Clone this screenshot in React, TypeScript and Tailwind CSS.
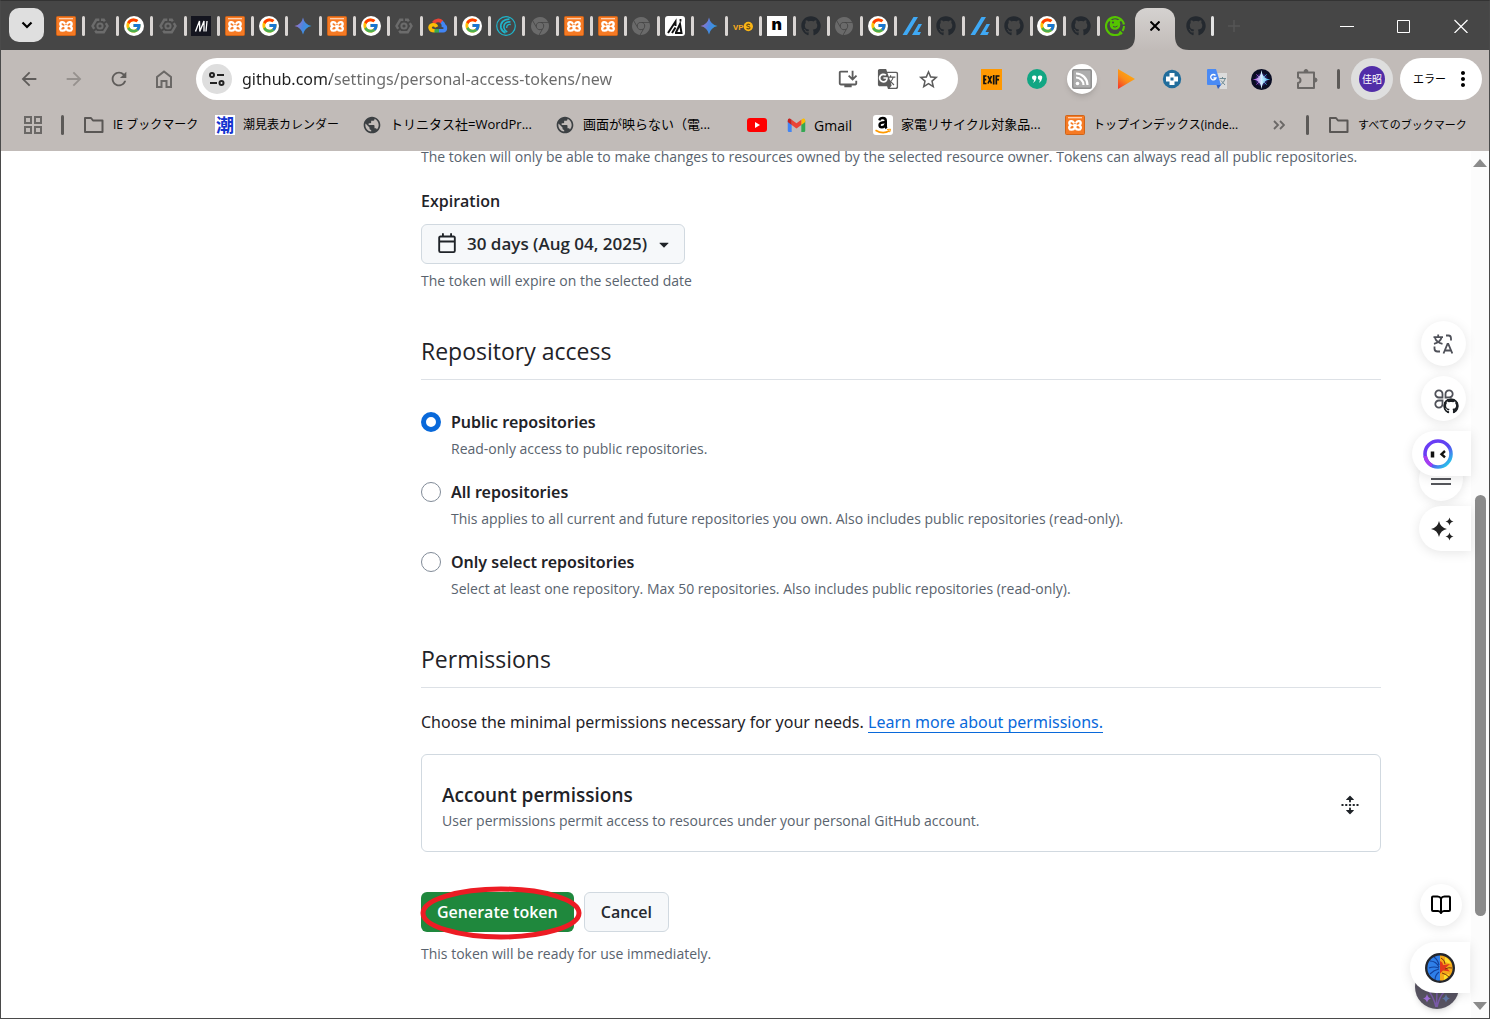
import type { ReactNode } from "react";
import { FcGoogle } from "react-icons/fc";
import { SiGooglechrome } from "react-icons/si";
import { FaGithub } from "react-icons/fa";
import {
  MdArrowBack,
  MdArrowForward,
  MdRefresh,
  MdInstallDesktop,
  MdGTranslate,
  MdStarBorder,
  MdMoreVert,
  MdPublic,
} from "react-icons/md";

const ui = "font-['Open_Sans','Noto_Sans_CJK_JP',sans-serif]";

/* ---------- tab icons ---------- */

function Xampp() {
  return (
    <svg viewBox="0 0 20 20" className="size-5 shrink-0">
      <rect x="0.500" y="0.500" width="19" height="19" rx="1" fill="#f67a24" stroke="#cf6419" />
      <path d="M3 2.700h14" stroke="#ffd9bd" strokeWidth="1.200" />
      <g fill="none" stroke="#fff" strokeWidth="2.300" strokeLinecap="round">
        <path d="M8.700 7.500C7.500 5.300 4.200 5.800 4.300 8.200c0 1.200 1 1.500 1.700 2.100-1.500.6-2.100 1.500-1.700 3 .6 2 4.400 1.900 5.200-.5l.5-2.300" />
        <path d="M11.300 7.500c1.200-2.200 4.500-1.700 4.400.7 0 1.200-1 1.500-1.700 2.100 1.500.6 2.100 1.500 1.700 3-.6 2-4.400 1.900-5.200-.5L10 10.500" />
        <path d="M8.500 10.300h3" />
      </g>
    </svg>
  );
}

function Google() {
  return (
    <span className="flex size-5 items-center justify-center rounded-full bg-white">
      <FcGoogle className="size-[17px]" />
    </span>
  );
}

function HexCloud() {
  return (
    <svg viewBox="0 0 20 20" className="size-5" fill="none" stroke="#6c6c6c">
      <path d="M9.300 3.800H6.200L2.500 10l1.700 2.800M5.300 14.600l1 1.600h7.500l3.700-6.200-1.700-2.800M11 3.800h2.800l1 1.600" strokeWidth="2.400" />
      <circle cx="10" cy="10" r="2.600" strokeWidth="2" />
    </svg>
  );
}

function Mlogo() {
  return (
    <svg viewBox="0 0 20 20" className="size-5">
      <rect width="20" height="20" fill="#14151f" />
      <path d="M4.500 15.500 8.500 5l.3 10.500L13 5v10.500M16 5l-1 10.500" fill="none" stroke="#fff" strokeWidth="1.300" />
    </svg>
  );
}

function Gemini() {
  return (
    <svg viewBox="0 0 20 20" className="size-5">
      <defs>
        <linearGradient id="gem" x1="0" x2="1" y1="0.300" y2="0.700">
          <stop offset="0.100" stopColor="#9a72c8" />
          <stop offset="0.500" stopColor="#4a86e0" />
          <stop offset="1" stopColor="#2ba0e0" />
        </linearGradient>
      </defs>
      <path d="M10 1.500Q11.500 8.500 18.500 10 11.500 11.500 10 18.500 8.500 11.500 1.500 10 8.500 8.500 10 1.500Z" fill="url(#gem)" />
    </svg>
  );
}

function GoogleCloud() {
  return (
    <svg viewBox="0 0 20 20" className="size-5" fill="none" strokeWidth="3.600">
      <path d="M5.500 7A5.500 5.500 0 0 1 14 6" stroke="#ea4335" />
      <path d="M13.500 6c1.500 1 1.900 2.200 1.900 3.500 2.600.5 2.800 5-.4 5.300h-4" stroke="#4285f4" />
      <path d="M11 14.800H6" stroke="#34a853" />
      <path d="M6.500 14.800C1 14.500.8 9.500 5 8.800c1.800-.2 3 .8 3.600 2.200" stroke="#fbbc05" />
    </svg>
  );
}

function Swirl() {
  return (
    <svg viewBox="0 0 20 20" className="size-5" fill="none" stroke="#1fb5cb">
      <circle cx="10" cy="10" r="9.300" strokeWidth="1.200" />
      <path d="M13.500 3.200C8 3 4 6.500 5 12c.5 2.300 2.200 4 4.500 4.800" strokeWidth="1.800" />
      <path d="M14.500 6C10.500 5.200 7.300 8 8 11.800c.4 2 1.600 3.400 3.300 4.200" strokeWidth="1.600" />
      <path d="M14.800 8.500c-2.800-.4-4.400 1-4 3.500" strokeWidth="1.300" />
    </svg>
  );
}

function Chrome() {
  return (
    <span className="flex size-5 items-center justify-center">
      <SiGooglechrome className="size-[18px] text-[#6a6a6a]" />
    </span>
  );
}

function AiLogo() {
  return (
    <svg viewBox="0 0 20 20" className="size-5">
      <rect width="20" height="20" rx="3" fill="#fff" />
      <path d="M3 17 10.500 5.500V10M7 17l3.500-5.500M11 16.500l4-8.500 1.500 9H10" fill="none" stroke="#111" strokeWidth="2" />
      <path d="M15.500 3v2.500" stroke="#111" strokeWidth="1.800" />
    </svg>
  );
}

function Vps() {
  return (
    <svg viewBox="0 0 20 20" className="size-5">
      <text x="0" y="14" fontFamily="Roboto" fontWeight="700" fontSize="8" fill="#f5a81c">VP</text>
      <circle cx="15.300" cy="10.500" r="4.700" fill="#fbb615" />
      <path d="M17 8.700q-3-1.200-3.200.5c0 1.700 3.300 1 3.200 2.700-.3 1.500-2.500 1-3.500.4" fill="none" stroke="#6b4a10" strokeWidth="1.200" />
    </svg>
  );
}

function Nlogo() {
  return (
    <span className="flex size-5 items-center justify-center bg-white pb-[3px] font-['Inter',sans-serif] text-base leading-none font-black text-black">
      n
    </span>
  );
}

function Github() {
  return <FaGithub className="size-5 text-[#24292f]" />;
}

function Bars() {
  return (
    <svg viewBox="0 0 20 20" className="size-5" fill="#3fa9f5">
      <path d="M11.500 1H16L5 19H.5ZM16.500 8H20l-4.500 8H19l-1.500 3H10Z" />
    </svg>
  );
}

function GreenQ() {
  return (
    <svg viewBox="0 0 20 20" className="size-5">
      <path d="M15.500 17.300A9 9 0 1 1 18.900 8.500" fill="none" stroke="#55c500" strokeWidth="2.200" />
      <path d="M19 10a9 9 0 0 1-1.500 5" fill="none" stroke="#55c500" strokeWidth="2" />
      <circle cx="10" cy="8.500" r="5.300" fill="#55c500" />
      <path d="m4 3.500 3 2M16 3.500l-3 2M14.500 15.500l2.500 2.500" stroke="#55c500" strokeWidth="2.200" />
      <circle cx="8" cy="6.500" r="1" fill="#464646" />
      <path d="M8 10.500q2 1.500 4.500-.5" stroke="#464646" fill="none" />
    </svg>
  );
}

const tabs: [string, () => ReactNode][] = [
  ["XAMPP", Xampp], ["API", HexCloud], ["Google", Google], ["API", HexCloud], ["M", Mlogo],
  ["XAMPP", Xampp], ["Google", Google], ["Gemini", Gemini], ["XAMPP", Xampp], ["Google", Google],
  ["API", HexCloud], ["Google Cloud", GoogleCloud], ["Google", Google], ["Swirl", Swirl], ["Chrome", Chrome],
  ["XAMPP", Xampp], ["XAMPP", Xampp], ["Chrome", Chrome], ["AI", AiLogo], ["Gemini", Gemini],
  ["VPS", Vps], ["n", Nlogo], ["GitHub", Github], ["Chrome", Chrome], ["Google", Google],
  ["Zenn", Bars], ["GitHub", Github], ["Zenn", Bars], ["GitHub", Github], ["Google", Google],
  ["GitHub", Github], ["Qiita", GreenQ],
];

function TabStrip() {
  return (
    <header className="flex h-[49px] shrink-0 items-stretch bg-[#464646]">
      <button aria-label="Search tabs" className="mt-[7px] ml-2 flex h-[34px] w-[35px] items-center justify-center rounded-[10px] bg-[#dfdfdf]">
        <svg viewBox="0 0 12 12" className="size-3" fill="none" stroke="#000" strokeWidth="2.200">
          <path d="m1.500 3.500 4.500 4.500 4.500-4.500" />
        </svg>
      </button>
      <nav aria-label="Tabs" className="ml-3 flex w-[1083px] items-center">
        {tabs.map(([name, Icon], i) => (
          <button key={i} aria-label={name} className="flex flex-1 items-center gap-[6px]">
            <Icon />
            {i < tabs.length - 1 && <span className="h-5 w-[3px] rounded-full bg-[#d9d5d3]" />}
          </button>
        ))}
      </nav>
      <div className="relative -ml-1 flex h-[42px] w-10 shrink-0 items-start justify-center self-end rounded-t-xl bg-gradient-to-b from-[#d5d2d0] to-[#c1bbb8] pt-2">
        <svg viewBox="0 0 14 14" className="absolute bottom-0 -left-[14px] size-[14px]">
          <path d="M14 0v14H0Q14 14 14 0Z" fill="#c1bbb8" />
        </svg>
        <svg viewBox="0 0 14 14" className="absolute -right-[14px] bottom-0 size-[14px]">
          <path d="M0 0v14h14Q0 14 0 0Z" fill="#c1bbb8" />
        </svg>
        <button aria-label="Close tab" className="flex size-5 items-center justify-center">
          <svg viewBox="0 0 10 10" className="size-[10px]" stroke="#000" strokeWidth="2">
            <path d="m.5.5 9 9m0-9-9 9" />
          </svg>
        </button>
      </div>
      <button aria-label="GitHub" className="ml-[11px] flex items-center gap-[5px]">
        <Github />
        <span className="h-5 w-[3px] rounded-full bg-[#e4e4e4]" />
      </button>
      <button aria-label="New tab" className="ml-[14px] flex items-center">
        <svg viewBox="0 0 12 12" className="size-3" stroke="#565656" strokeWidth="1.500">
          <path d="M6 0v12M0 6h12" />
        </svg>
      </button>
      <div className="ml-auto flex">
        <button aria-label="Minimize" className="flex w-[57px] items-center justify-center">
          <svg viewBox="0 0 14 14" className="size-[14px]" stroke="#fff"><path d="M0 7.500h14" /></svg>
        </button>
        <button aria-label="Maximize" className="flex w-[57px] items-center justify-center">
          <svg viewBox="0 0 14 14" className="size-[14px]" stroke="#fff" fill="none"><path d="M.5 1.500h12v12H.5z" /></svg>
        </button>
        <button aria-label="Close" className="flex w-[57px] items-center justify-center">
          <svg viewBox="0 0 14 14" className="size-[14px]" stroke="#fff" strokeWidth="1.200"><path d="m.5 1 13 13m0-13-13 13" /></svg>
        </button>
      </div>
    </header>
  );
}

/* ---------- toolbar ---------- */

function IconButton({ label, children }: { label: string; children: ReactNode }) {
  return (
    <button aria-label={label} className="flex w-[45px] items-center justify-center">
      {children}
    </button>
  );
}

function Toolbar() {
  return (
    <div className="flex h-[58px] shrink-0 items-center pr-[7px] pl-[5px]">
      <div className="flex">
        <IconButton label="Back"><MdArrowBack className="size-[22px] text-[#5f5c5a]" /></IconButton>
        <IconButton label="Forward"><MdArrowForward className="size-[22px] text-[#96918e]" /></IconButton>
        <IconButton label="Reload"><MdRefresh className="size-[22px] text-[#5f5c5a]" /></IconButton>
        <IconButton label="Home">
          <svg viewBox="0 0 16 18" className="h-[18px] w-4" fill="none" stroke="#6b6866" strokeWidth="2">
            <path d="M1 7v10h4.500v-6h5v6H15V7L8 1.500Z" />
          </svg>
        </IconButton>
      </div>
      <div className="ml-[10px] flex h-[42px] flex-1 items-center rounded-full bg-white pr-[18px] pl-[6px]">
        <button aria-label="Site information" className="flex size-[30px] shrink-0 items-center justify-center rounded-full bg-[#dedede]">
          <svg viewBox="0 0 16 14" className="h-[14px] w-4" fill="none" stroke="#222" strokeWidth="2">
            <circle cx="3" cy="3" r="2" />
            <path d="M8 3h7M1 11h7" />
            <circle cx="12.500" cy="11" r="2" />
          </svg>
        </button>
        <input
          aria-label="Address"
          defaultValue="github.com/settings/personal-access-tokens/new"
          className="ml-[10px] h-8 min-w-0 flex-1 bg-[linear-gradient(90deg,#1f1f1f_88px,#6a6a6a_88px)] bg-clip-text font-['Noto_Sans',sans-serif] text-base text-transparent outline-none"
        />
        <div className="flex items-center gap-[18px] text-[#5c5c5c]">
          <button aria-label="Install app"><MdInstallDesktop className="size-[22px]" /></button>
          <button aria-label="Translate"><MdGTranslate className="size-[22px]" /></button>
          <button aria-label="Bookmark this page"><MdStarBorder className="size-[23px]" /></button>
        </div>
      </div>
      <div className="ml-[11px] flex">
        <IconButton label="EXIF">
          <svg viewBox="0 0 21 21" className="size-[21px]">
            <rect width="21" height="21" fill="#ff9800" />
            <path d="M5.500 7H3v7.500h2.500M3 10.700h2.200M7 7l3.500 7.500M10.500 7 7 14.500M12.700 6v9.500M15.300 15.500V7H18.500M15.300 10.700h2.700" fill="none" stroke="#111" strokeWidth="1.700" />
          </svg>
        </IconButton>
        <IconButton label="Quotes">
          <svg viewBox="0 0 20 20" className="size-5">
            <circle cx="10" cy="10" r="10" fill="#11a683" />
            <path d="M5 8.800a2.200 2.200 0 1 1 4.300.5Q9 12.500 6 14q1-1.500 1-3a2.200 2.200 0 0 1-2-2.200ZM10.800 8.800a2.200 2.200 0 1 1 4.300.5q-.3 3.200-3.300 4.700 1-1.500 1-3a2.200 2.200 0 0 1-2-2.200Z" fill="#fff" />
          </svg>
        </IconButton>
        <IconButton label="RSS">
          <span className="flex size-[30px] shrink-0 items-center justify-center rounded-full bg-white shadow-md">
            <svg viewBox="0 0 20 20" className="size-5">
              <rect width="20" height="20" rx="2" fill="#8f8f8f" />
              <rect x="1.500" y="1.500" width="17" height="17" rx="1" fill="#adadad" />
              <circle cx="5.500" cy="14.500" r="1.800" fill="#fff" />
              <path d="M4 8.500a7.500 7.500 0 0 1 7.500 7.500M4 4.500A11.500 11.500 0 0 1 15.500 16" fill="none" stroke="#fff" strokeWidth="2.200" />
            </svg>
          </span>
        </IconButton>
        <IconButton label="Player">
          <svg viewBox="0 0 20 20" className="size-5">
            <defs>
              <linearGradient id="play" x1="0" x2="0.700" y1="1" y2="0">
                <stop offset="0" stopColor="#f4302c" />
                <stop offset="0.500" stopColor="#fb8c1a" />
                <stop offset="1" stopColor="#ffb30a" />
              </linearGradient>
            </defs>
            <path d="M1 0 18 10 1 20Z" fill="url(#play)" />
          </svg>
        </IconButton>
        <IconButton label="Plus tool">
          <svg viewBox="0 0 20 20" className="size-5">
            <circle cx="10" cy="10" r="9.200" fill="#216d9c" />
            <path d="M7.500 4h5v3.500H16v5h-3.500V16h-5v-3.500H4v-5h3.500Z" fill="#fff" />
            <path d="M8.500 8.500h3v3h-3z" fill="#216d9c" />
          </svg>
        </IconButton>
        <IconButton label="Google Translate">
          <svg viewBox="0 0 20 20" className="size-5">
            <path d="M8 4h12v16h-7Z" fill="#dcdcdc" />
            <path d="M0 1q0-1 1-1h8l5 16H1q-1 0-1-1Z" fill="#4a8af4" />
            <path d="M9.500 16H14l-3 4Z" fill="#2c5fc4" />
            <path d="M8.500 6.500A2.700 2.700 0 1 0 9 9H6.500" fill="none" stroke="#fff" strokeWidth="1.300" />
            <path d="M12.500 9.500H19M15.500 8v1.500M18 10q-1 3.500-4 5.500M14 11.500l4 4.500" fill="none" stroke="#6f8a94" />
          </svg>
        </IconButton>
        <IconButton label="Spark">
          <svg viewBox="0 0 20 20" className="size-[21px]">
            <defs>
              <linearGradient id="spark">
                <stop offset="0" stopColor="#b030d8" />
                <stop offset="0.500" stopColor="#cfeeff" />
                <stop offset="1" stopColor="#2aa8e8" />
              </linearGradient>
            </defs>
            <circle cx="10" cy="10" r="10" fill="#0a0d24" />
            <circle cx="10" cy="10" r="6" fill="#241d5c" />
            <path d="M10 1q.6 8.400 8.500 9-7.900.6-8.500 9-.6-8.400-8.500-9Q9.400 9.400 10 1Z" fill="url(#spark)" />
            <path d="m5 5 10 10M15 5 5 15" stroke="url(#spark)" strokeWidth="0.700" />
          </svg>
        </IconButton>
        <IconButton label="Extensions">
          <svg viewBox="0 0 22 22" className="size-[22px]" fill="none" stroke="#6b6866" strokeWidth="2" strokeLinejoin="round">
            <path d="M2 4.500h16V20H2v-5q2.500-.5 2.500-2.800T2 9.500Z" />
            <path d="M8 3.500a2 2 0 0 1 4 0ZM19 10a2 2 0 0 1 0 4Z" fill="#6b6866" strokeWidth="1" />
          </svg>
        </IconButton>
      </div>
      <span className="ml-2 h-5 w-[3px] rounded-full bg-[#5c5957]" />
      <button aria-label="Profile" className="ml-[11px] flex size-[42px] items-center justify-center rounded-full bg-[#dedede]">
        <span className="flex size-[26px] items-center justify-center rounded-full bg-[#512da8] text-[10px] leading-none text-white">佳昭</span>
      </button>
      <button className="ml-[7px] flex h-[42px] w-[82px] items-center justify-center rounded-full bg-white pl-[6px] text-[11px] text-black">
        エラー
        <MdMoreVert className="ml-[5px] size-6" />
      </button>
    </div>
  );
}

/* ---------- bookmarks ---------- */

function Bookmark({ icon, children, className, label }: { icon: ReactNode; children?: ReactNode; className: string; label?: string }) {
  return (
    <a href="#" aria-label={label} className={"flex shrink-0 items-center gap-2 whitespace-nowrap text-black " + className}>
      {icon}
      {children}
    </a>
  );
}

function Folder() {
  return (
    <svg viewBox="0 0 22 18" className="h-[18px] w-[22px]" fill="none" stroke="#5a5755" strokeWidth="2" strokeLinejoin="round">
      <path d="M2 2h6l2 2.500h9.500V16H2Z" />
    </svg>
  );
}

function Globe() {
  return <MdPublic className="size-5 text-[#3c4043]" />;
}

function BookmarksBar() {
  return (
    <nav aria-label="Bookmarks" className="flex h-[43px] shrink-0 items-center pr-[17px] pb-[9px] pl-[22px]">
      <button aria-label="Apps">
        <svg viewBox="0 0 20 20" className="size-5" fill="none" stroke="#6b6866" strokeWidth="2">
          <path d="M2 2h6v6H2zM12 2h6v6h-6zM2 12h6v6H2zM12 12h6v6h-6z" />
        </svg>
      </button>
      <span className="ml-[18px] h-5 w-[3px] rounded-full bg-[#5c5957]" />
      <Bookmark className="ml-[19px] w-[132px] text-[12px]" icon={<Folder />}>IE ブックマーク</Bookmark>
      <Bookmark
        className="w-[147px] text-[12px]"
        icon={<span className="flex size-5 items-center justify-center bg-white text-[18px] leading-5 font-bold text-[#1434d0]">潮</span>}
      >
        潮見表カレンダー
      </Bookmark>
      <Bookmark className="w-[193px] text-[13px]" icon={<Globe />}>トリニタス社=WordPr...</Bookmark>
      <Bookmark className="w-[192px] text-[13px]" icon={<Globe />}>画面が映らない（電...</Bookmark>
      <Bookmark
        label="YouTube"
        className="w-10"
        icon={
          <svg viewBox="0 0 20 14" className="h-[14px] w-5">
            <rect width="20" height="14" rx="3" fill="#f00" />
            <path d="m8 4 5 3-5 3Z" fill="#fff" />
          </svg>
        }
      />
      <Bookmark
        className="w-[86px] text-[14px]"
        icon={
          <svg viewBox="0 0 20 16" className="h-[14px] w-[19px]">
            <path d="M0 3v11.500Q0 16 1.500 16H4.500V7Z" fill="#4285f4" />
            <path d="M20 3v11.500q0 1.500-1.500 1.500h-3V7Z" fill="#34a853" />
            <path d="M15.500 2 17.500.7Q20 0 20 3v1.500L15.500 8Z" fill="#fbbc04" />
            <path d="M4.500 2 10 6l5.500-4v6L10 12 4.500 8Z" fill="#ea4335" />
            <path d="M4.500 2 2.500.7Q0 0 0 3v1.500L4.500 8Z" fill="#c5221f" />
          </svg>
        }
      >
        Gmail
      </Bookmark>
      <Bookmark
        className="w-[192px] text-[13px]"
        icon={
          <svg viewBox="0 0 20 20" className="size-5">
            <rect width="20" height="20" rx="3" fill="#fff" />
            <path d="M6.300 5.300Q7 3 9.800 3q3 0 3 3v5.500q0 1 .8 1.800" fill="none" stroke="#000" strokeWidth="2.400" />
            <path d="M12.500 7.200Q6.500 7 6.500 10q0 2.300 2.300 2.300 3 0 3.700-3" fill="none" stroke="#000" strokeWidth="2.400" />
            <path d="M2.500 15.200q7.500 4.500 14 .5" fill="none" stroke="#f90" strokeWidth="1.600" />
            <path d="m14 14.500 3.500-.3-.8 3" fill="none" stroke="#f90" />
          </svg>
        }
      >
        家電リサイクル対象品...
      </Bookmark>
      <Bookmark className="text-[12px]" icon={<Xampp />}>トップインデックス(inde...</Bookmark>
      <button aria-label="More bookmarks" className="ml-auto">
        <svg viewBox="0 0 12 10" className="h-[10px] w-3" fill="none" stroke="#6b6866" strokeWidth="1.800">
          <path d="m1 1 4 4-4 4M7 1l4 4-4 4" />
        </svg>
      </button>
      <span className="mr-[19px] ml-[21px] h-5 w-[3px] rounded-full bg-[#5c5957]" />
      <Bookmark className="w-[144px] text-[11px]" icon={<Folder />}>すべてのブックマーク</Bookmark>
    </nav>
  );
}

/* ---------- page ---------- */

function CalendarIcon({ className }: { className: string }) {
  return (
    <svg viewBox="0 0 16 16" fill="currentColor" className={className}>
      <path d="M4.75 0a.75.75 0 0 1 .75.75V2h5V.75a.75.75 0 0 1 1.500 0V2h1.250c.966 0 1.750.784 1.750 1.750v10.500A1.750 1.750 0 0 1 13.250 16H2.750A1.750 1.750 0 0 1 1 14.250V3.750C1 2.784 1.784 2 2.750 2H4V.75A.75.75 0 0 1 4.750 0ZM2.500 7.500v6.750c0 .138.112.25.25.25h10.500a.25.25 0 0 0 .25-.25V7.500Zm10.750-4H2.750a.25.25 0 0 0-.25.25V6h11V3.750a.25.25 0 0 0-.25-.25Z" />
    </svg>
  );
}

function CaretIcon({ className }: { className: string }) {
  return (
    <svg viewBox="0 0 16 16" fill="currentColor" className={className}>
      <path d="m4.427 7.427 3.396 3.396a.25.25 0 0 0 .354 0l3.396-3.396A.25.25 0 0 0 11.396 7H4.604a.25.25 0 0 0-.177.427Z" />
    </svg>
  );
}

function UnfoldIcon({ className }: { className: string }) {
  return (
    <svg viewBox="0 0 16 16" fill="currentColor" className={className}>
      <path d="m8.177.677 2.896 2.896a.25.25 0 0 1-.177.427H8.750v1.250a.75.75 0 0 1-1.500 0V4H5.104a.25.25 0 0 1-.177-.427L7.823.677a.25.25 0 0 1 .354 0ZM7.250 10.750a.75.75 0 0 1 1.500 0V12h2.146a.25.25 0 0 1 .177.427l-2.896 2.896a.25.25 0 0 1-.354 0l-2.896-2.896A.25.25 0 0 1 5.104 12H7.250v-1.250Zm-5-2a.75.75 0 0 0 0-1.500h-.5a.75.75 0 0 0 0 1.500h.5ZM6 8a.75.75 0 0 1-.75.75h-.5a.75.75 0 0 1 0-1.500h.5A.75.75 0 0 1 6 8Zm2.250.75a.75.75 0 0 0 0-1.500h-.5a.75.75 0 0 0 0 1.500h.5ZM12 8a.75.75 0 0 1-.75.75h-.5a.75.75 0 0 1 0-1.500h.5A.75.75 0 0 1 12 8Zm2.250.75a.75.75 0 0 0 0-1.500h-.5a.75.75 0 0 0 0 1.500h.5Z" />
    </svg>
  );
}

function RepoOption({ id, title, note, checked }: { id: string; title: string; note: string; checked?: boolean }) {
  return (
    <div className="flex gap-[10px]">
      <input
        id={id}
        type="radio"
        name="repositories"
        defaultChecked={checked}
        className="mt-[5px] size-5 shrink-0 appearance-none rounded-full border border-[#818b98] bg-white checked:border-[5px] checked:border-[#0969da]"
      />
      <div>
        <label htmlFor={id} className="block font-['Noto_Sans',sans-serif] text-base leading-[30px] font-semibold">{title}</label>
        <p className="text-sm leading-6 text-[#59636e]">{note}</p>
      </div>
    </div>
  );
}

function SectionTitle({ id, children }: { id: string; children: ReactNode }) {
  return <h2 id={id} className="border-b border-[#dde1e6] pb-[10px] text-[23px] leading-9">{children}</h2>;
}

function TokenForm() {
  return (
    <form className="mr-[90px] ml-[420px] min-w-0 flex-1 text-[#1f2328]" onSubmit={(e) => e.preventDefault()}>
      <p className="-mt-[6px] text-sm leading-6 text-[#59636e]">
        The token will only be able to make changes to resources owned by the selected resource owner. Tokens can always read all public repositories.
      </p>
      <label htmlFor="expiration" className="mt-5 block text-base leading-6 font-semibold">Expiration</label>
      <div className="relative mt-[11px] w-[264px]">
        <select
          id="expiration"
          className="h-10 w-full appearance-none rounded-md border border-[#d1d9e0] bg-[#f6f8fa] pl-[45px] text-[17px] font-semibold text-[#25292e]"
        >
          <option>30 days (Aug 04, 2025)</option>
        </select>
        <CalendarIcon className="pointer-events-none absolute top-[9px] left-4 size-5" />
        <CaretIcon className="pointer-events-none absolute top-[10px] right-[11px] size-5" />
      </div>
      <p className="mt-[5px] text-sm leading-6 text-[#59636e]">The token will expire on the selected date</p>

      <div className="mt-10">
        <SectionTitle id="repository-access">Repository access</SectionTitle>
      </div>
      <fieldset aria-labelledby="repository-access" className="mt-[27px] flex flex-col gap-4">
        <RepoOption id="public" title="Public repositories" note="Read-only access to public repositories." checked />
        <RepoOption id="all" title="All repositories" note="This applies to all current and future repositories you own. Also includes public repositories (read-only)." />
        <RepoOption id="select" title="Only select repositories" note="Select at least one repository. Max 50 repositories. Also includes public repositories (read-only)." />
      </fieldset>

      <div className="mt-10">
        <SectionTitle id="permissions">Permissions</SectionTitle>
      </div>
      <p className="mt-[22px] font-['Noto_Sans',sans-serif] text-base leading-6">
        Choose the minimal permissions necessary for your needs.{" "}
        <a href="#" className="text-[#0969da] underline underline-offset-4">Learn more about permissions.</a>
      </p>
      <button type="button" className="mt-5 flex w-full items-center justify-between rounded-md border border-[#d1d9e0] px-5 pt-6 pb-5 text-left">
        <span className="block">
          <span className="block text-[19px] leading-8 font-semibold">Account permissions</span>
          <span className="block text-sm leading-5 text-[#59636e]">User permissions permit access to resources under your personal GitHub account.</span>
        </span>
        <UnfoldIcon className="size-5" />
      </button>
      <div className="mt-10 flex gap-[10px]">
        <div className="relative">
          <button type="submit" className="h-10 rounded-md bg-[#1f883d] px-4 text-base font-semibold text-white">Generate token</button>
          <svg viewBox="0 0 162 54" className="pointer-events-none absolute -top-[6px] -left-px h-[54px] w-[162px]" fill="none" stroke="#ed1c24" strokeWidth="5">
            <ellipse cx="81" cy="27" rx="78" ry="24" />
          </svg>
        </div>
        <button type="button" className="h-10 rounded-md border border-[#d1d9e0] bg-[#f6f8fa] px-4 text-base font-semibold text-[#25292e]">Cancel</button>
      </div>
      <p className="mt-[10px] text-sm leading-6 text-[#59636e]">This token will be ready for use immediately.</p>
    </form>
  );
}

/* ---------- floating extension buttons ---------- */

const round = "absolute flex items-center justify-center bg-white shadow-[0_2px_12px_rgba(0,0,0,0.1)] ";

function FloatingButtons() {
  return (
    <aside className="absolute inset-y-0 right-[18px] w-[60px]">
      <button aria-label="Translate page" className={round + "top-[170px] right-[5px] size-[45px] rounded-full"}>
        <svg viewBox="0 0 20 20" className="relative right-px size-5" fill="none" stroke="#4f5159" strokeWidth="1.800">
          <path d="M.5 3.200h9.500M5.200.5v2.700M8.500 3.500Q7.500 8 1 9.800M2 4q1.500 4.500 7.500 5.800M13 1.500h2.500q2.500 0 2.500 3v2M1.500 12.500v2q0 3 3 3h2.500" />
          <path d="m10.500 19.500 4-9.500h.8l4 9.500M12 16.500h6" />
        </svg>
      </button>
      <button aria-label="GitHub shortcuts" className={round + "top-[225px] right-[5px] size-[45px] rounded-full"}>
        <svg viewBox="0 0 20 20" className="size-5" fill="none" stroke="#4f5159" strokeWidth="1.800">
          <path d="M8.500 8.500H5A3.600 3.600 0 1 1 8.500 5ZM11.500 8.500V5A3.600 3.600 0 1 1 15 8.500ZM8.500 11.500V15A3.600 3.600 0 1 1 5 11.500Z" />
        </svg>
        <FaGithub className="absolute right-[7px] bottom-[7px] size-4 rounded-full bg-white text-[#1c2024]" />
      </button>
      <button aria-label="Menu" className={round + "top-[306px] right-2 size-11 rounded-full"}>
        <svg viewBox="0 0 20 14" className="h-[14px] w-5" stroke="#55575c" strokeWidth="2">
          <path d="M0 2h20M0 7h20M0 12h20" />
        </svg>
      </button>
      <button aria-label="Assistant" className={round + "top-[280px] right-0 h-[45px] w-[59px] rounded-l-full pr-[7px]"}>
        <svg viewBox="0 0 30 30" className="size-[30px]">
          <defs>
            <linearGradient id="face" x1="0.200" x2="0.900" y1="0.200" y2="0.900">
              <stop offset="0" stopColor="#6a3df5" />
              <stop offset="0.500" stopColor="#5a46f0" />
              <stop offset="1" stopColor="#28c4ea" />
            </linearGradient>
          </defs>
          <circle cx="15" cy="15" r="13" fill="#fff" stroke="url(#face)" strokeWidth="3.600" />
          <path d="M2.200 17A13 13 0 0 0 9 26.500" stroke="#a63df0" strokeWidth="3.600" fill="none" />
          <path d="M9.500 12.500v6" stroke="#111" strokeWidth="3.500" />
          <path d="m22 12-3.500 3.200 3.500 3.200" stroke="#111" strokeWidth="2.400" fill="none" />
        </svg>
      </button>
      <button aria-label="AI tools" className={round + "top-[355px] right-0 h-[45px] w-[52px] rounded-l-full pr-[7px]"}>
        <svg viewBox="0 0 24 24" className="size-6" fill="#222">
          <path d="M9 4q1.500 6.800 8 8-6.500 1.200-8 8-1.500-6.800-8-8 6.500-1.200 8-8ZM19.500.5q.7 3.300 4 4-3.300.7-4 4-.7-3.300-4-4 3.300-.7 4-4ZM19.500 15.500q.7 3.300 4 4-3.300.7-4 4-.7-3.300-4-4 3.300-.7 4-4Z" />
        </svg>
      </button>
      <button aria-label="Reader" className={round + "right-[9px] bottom-[92px] size-[42px] rounded-full"}>
        <svg viewBox="0 0 20 20" className="size-5" fill="none" stroke="#000" strokeWidth="2" strokeLinejoin="round">
          <path d="M10 3.500Q9 1.500 6.500 1.500H2Q1 1.500 1 2.500V15q0 1 1 1h5q2 0 3 2 1-2 3-2h5q1 0 1-1V2.500q0-1-1-1h-4.500Q11 1.500 10 3.500ZM10 3.500V18" />
        </svg>
      </button>
      <button aria-label="Spark assistant" className="absolute right-3 bottom-[9px] size-11 overflow-hidden rounded-full bg-[#575361] shadow-md">
        <svg viewBox="0 0 44 44" className="size-11">
          <path d="M22 22q0 14-1 20M21 42Q18 30 12 24M22 42q2-10 8-16" stroke="#7a5aa8" strokeWidth="1.500" fill="none" />
          <path d="M12 29q1 4 4 4.500-3 .5-4 4-1-3.500-4-4 3-.5 4-4.500Z" fill="#a070d8" />
          <path d="M31 29q1 4 4 4.500-3 .5-4 4-1-3.500-4-4 3-.5 4-4.500Z" fill="#6078a8" />
        </svg>
      </button>
      <button aria-label="Brain" className={round + "right-px bottom-[25px] h-[51px] w-[60px] rounded-l-full pr-px"}>
        <svg viewBox="0 0 30 30" className="size-[30px]">
          <circle cx="15" cy="15" r="14" fill="#2f7fe8" />
          <path d="M15 1a14 14 0 0 1 0 28Z" fill="#f5a81a" />
          <path d="M15 8q3 1 3 4l7-1-4 3.500 4 4-7-1-3 3Z" fill="#e2391c" />
          <path d="M20 4q5 3 6 7l-6-2ZM19 22l5-1q-1 4-5 6Z" fill="#fde02a" />
          <path d="M5 8q6 0 9 6M4 15q5-2 10 0M5 21q4-4 9-5M9 4q4 3 5 8M10 27q0-5 4-8" stroke="#12409c" strokeWidth="1.200" fill="none" />
          <path d="M17 20q4 1 7 4M16 5q4 2 4 6M20 16q4-2 7-1" stroke="#7a3a08" strokeWidth="1" fill="none" />
          <circle cx="15" cy="15" r="13.800" fill="none" stroke="#24262c" strokeWidth="2.400" />
        </svg>
      </button>
    </aside>
  );
}

function Scrollbar() {
  return (
    <div className="flex w-[18px] shrink-0 flex-col items-center bg-[#fcfcfc] py-2">
      <svg viewBox="0 0 14 8" className="h-2 w-[14px] shrink-0" fill="#8b8b8b"><path d="M7 0l7 8H0Z" /></svg>
      <div className="flex w-full flex-1 flex-col items-center">
        <div className="flex-[328]" />
        <div className="w-[11px] flex-[422] rounded-full bg-[#8b8b8b]" />
        <div className="flex-[86]" />
      </div>
      <svg viewBox="0 0 14 8" className="h-2 w-[14px] shrink-0" fill="#8b8b8b"><path d="M7 8 0 0h14Z" /></svg>
    </div>
  );
}

export default function App() {
  return (
    <div className={"flex h-screen flex-col overflow-hidden border border-[#4a4a4a] border-t-[#333] bg-[#c1bbb8] " + ui}>
      <TabStrip />
      <Toolbar />
      <BookmarksBar />
      <main className="relative flex min-h-0 flex-1 bg-white">
        <div className="flex min-w-0 flex-1 overflow-hidden">
          <TokenForm />
        </div>
        <Scrollbar />
        <FloatingButtons />
      </main>
    </div>
  );
}
